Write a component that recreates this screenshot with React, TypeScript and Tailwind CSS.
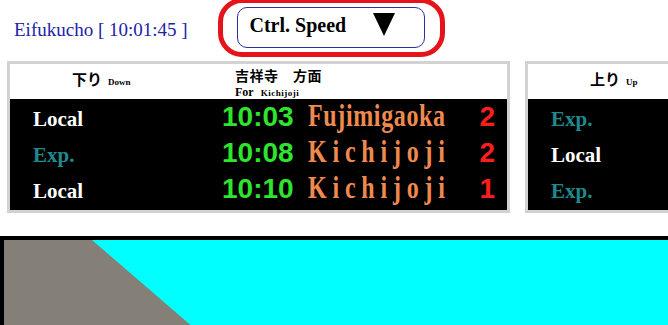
import React from "react";

type Row = { type: string; time: string; dest: string; track: string };

const downRows: Row[] = [
  { type: "Local", time: "10:03", dest: "Fujimigaoka", track: "2" },
  { type: "Exp.", time: "10:08", dest: "Kichijoji", track: "2" },
  { type: "Local", time: "10:10", dest: "Kichijoji", track: "1" },
];

const upRows: Row[] = [
  { type: "Exp.", time: "", dest: "", track: "" },
  { type: "Local", time: "", dest: "", track: "" },
  { type: "Exp.", time: "", dest: "", track: "" },
];

const serif = "font-['Liberation_Serif','Times_New_Roman',serif]";
const sans = "font-['Liberation_Sans',Arial,sans-serif]";
const cjk = "font-['Noto_Sans_CJK_JP','Noto_Sans',sans-serif]";
const NBSP = "\u00a0";

function Panel({
  dir,
  dirEn,
  destJa,
  destEn,
  rows,
}: {
  dir: string;
  dirEn: string;
  destJa?: string;
  destEn?: string;
  rows: Row[];
}) {
  return (
    <div className="w-[503px] shrink-0 border-[3px] border-[#d2d2d2] bg-white">
      <div className="flex h-[35px] items-start pl-[62px] text-black">
        <div className="flex w-[163px] items-baseline pt-[5px]">
          <span className={`${cjk} text-[15px] font-bold leading-[20px]`}>{dir}</span>
          <span className={`${serif} ml-[6px] text-[9px] font-bold`}>{dirEn}</span>
        </div>
        {destJa && (
          <div className="flex flex-col pt-[3px]">
            <span className={`${cjk} text-[14px] font-bold leading-[16px] tracking-[0.5px]`}>{destJa}</span>
            <div className="mt-[2px] flex items-baseline leading-[14px]">
              <span className={`${serif} text-[12px] font-bold`}>For</span>
              <span className={`${serif} ml-[7px] text-[9px] font-bold tracking-[0.5px]`}>{destEn}</span>
            </div>
          </div>
        )}
      </div>
      <div className="bg-black pb-[3px]">
        {rows.map((r, i) => (
          <div key={i} className="flex h-[36px] items-baseline">
            <div
              className={`${serif} w-[212px] pl-[23px] text-[21px] font-bold leading-[36px] ${
                r.type === "Exp." ? "text-[#1d8b8d]" : "text-white"
              }`}
            >
              {r.type}
            </div>
            <div className={`${sans} w-[86px] text-[28px] font-bold leading-[36px] text-[#2ee52e]`}>
              {r.time || NBSP}
            </div>
            <div
              className={`${serif} flex w-[137px] origin-[50%_26px] scale-y-[1.3] justify-between text-[24px] font-bold leading-[36px] text-[#ef8a4f]`}
            >
              {(r.dest || NBSP).split("").map((c, j) => (
                <span key={j}>{c}</span>
              ))}
            </div>
            <div className={`${sans} w-[50px] text-right text-[28px] font-bold leading-[36px] text-[#ff1e1e]`}>
              {r.track || NBSP}
            </div>
          </div>
        ))}
      </div>
    </div>
  );
}

export default function App() {
  return (
    <div className="h-[325px] w-full overflow-hidden bg-white">
      <div className="flex h-[61px] items-start">
        <div
          className={`${serif} mt-[20px] w-[218px] whitespace-nowrap pl-[14px] text-[19px] leading-[20px] text-[#2222a6]`}
        >
          Eifukucho [ 10:01:45 ]
        </div>
        <div className="mt-[-2px] h-[59px] w-[227px] rounded-[24px] border-[5px] border-[#e5141c] pb-[4px] pl-[14px] pr-[15px] pt-[4px]">
          <div className="flex h-[41px] w-[188px] items-start rounded-[10px] border-[1.5px] border-[#2b2fa3] bg-white pl-[11.5px]">
            <span className={`${serif} mt-[5px] w-[123px] text-[20px] font-bold leading-[24px] text-black`}>
              Ctrl. Speed
            </span>
            <svg width="22" height="23" viewBox="0 0 22 23" className="mt-[4.5px]">
              <polygon points="0,0 22,0 11,23" fill="#000" />
            </svg>
          </div>
        </div>
      </div>
      <div className="flex gap-[15px] pl-[7px]">
        <Panel dir="下り" dirEn="Down" destJa="吉祥寺　方面" destEn="Kichijoji" rows={downRows} />
        <Panel dir="上り" dirEn="Up" rows={upRows} />
      </div>
      <div className="mt-[23px] h-[140px] w-[720px] border-[4px] border-black bg-[#00ffff]">
        <svg width="712" height="132" viewBox="0 0 712 132" className="block">
          <polygon points="0,0 88,0 241,132 0,132" fill="#858077" />
        </svg>
      </div>
    </div>
  );
}
